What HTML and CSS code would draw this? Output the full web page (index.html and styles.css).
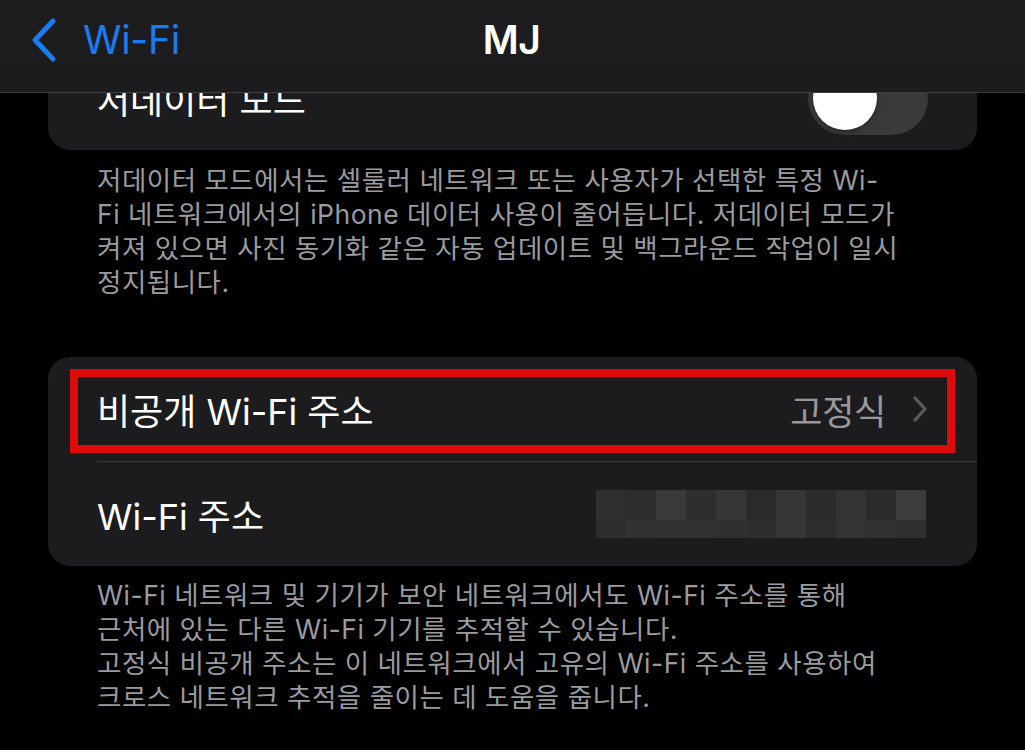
FILE: index.html
```html
<!DOCTYPE html>
<html lang="ko">
<head>
<meta charset="utf-8">
<title>MJ</title>
<link rel="stylesheet" href="styles.css">
</head>
<body>
<div class="screen">
  <header class="navbar">
    <div class="nav-back">
      <svg class="back-chevron" viewBox="0 0 28 46" width="28" height="46">
        <path d="M23 4 L5 23 L23 42" fill="none" stroke="#1a7cf0" stroke-width="5" stroke-linecap="round" stroke-linejoin="round"/>
      </svg>
      <span class="back-label">Wi-Fi</span>
    </div>
    <div class="nav-title">MJ</div>
    <div class="nav-spacer"></div>
  </header>

  <main class="content">
    <section class="card card-top">
      <div class="row">
        <span class="row-label">저데이터 모드</span>
        <div class="toggle"><div class="knob"></div></div>
      </div>
    </section>
    <p class="footnote">
      <span class="line">저데이터 모드에서는 셀룰러 네트워크 또는 사용자가 선택한 특정 Wi-</span>
      <span class="line">Fi 네트워크에서의 iPhone 데이터 사용이 줄어듭니다. 저데이터 모드가</span>
      <span class="line">켜져 있으면 사진 동기화 같은 자동 업데이트 및 백그라운드 작업이 일시</span>
      <span class="line">정지됩니다.</span>
    </p>

    <section class="card card-second">
      <div class="row row-private">
        <span class="row-label">비공개 Wi-Fi 주소</span>
        <div class="row-value">
          <span class="value-text">고정식</span>
          <svg class="chevron" viewBox="0 0 16 28" width="16" height="28">
            <path d="M3 3 L13 14 L3 25" fill="none" stroke="#5c5c60" stroke-width="3.2" stroke-linecap="round" stroke-linejoin="round"/>
          </svg>
        </div>
        <div class="highlight"></div>
      </div>
      <div class="separator"></div>
      <div class="row">
        <span class="row-label">Wi-Fi 주소</span>
        <div class="mosaic">
          <div class="m" style="background:#2f2f31"></div>
          <div class="m" style="background:#2d2d2f"></div>
          <div class="m" style="background:#3a3a3c"></div>
          <div class="m" style="background:#2e2e30"></div>
          <div class="m" style="background:#363638"></div>
          <div class="m" style="background:#2a2a2c"></div>
          <div class="m" style="background:#363638"></div>
          <div class="m" style="background:#2b2b2d"></div>
          <div class="m" style="background:#333336"></div>
          <div class="m" style="background:#2b2b2d"></div>
          <div class="m" style="background:#3c3c3e"></div>
          <div class="m" style="background:#2d2d2f"></div>
          <div class="m" style="background:#323234"></div>
          <div class="m" style="background:#313133"></div>
          <div class="m" style="background:#313133"></div>
          <div class="m" style="background:#303032"></div>
          <div class="m" style="background:#2e2e30"></div>
          <div class="m" style="background:#363638"></div>
          <div class="m" style="background:#2c2c2e"></div>
          <div class="m" style="background:#333335"></div>
          <div class="m" style="background:#313133"></div>
          <div class="m" style="background:#303032"></div>
        </div>
      </div>
    </section>
    <p class="footnote footnote-bottom">
      <span class="line">Wi-Fi 네트워크 및 기기가 보안 네트워크에서도 Wi-Fi 주소를 통해</span>
      <span class="line">근처에 있는 다른 Wi-Fi 기기를 추적할 수 있습니다.</span>
      <span class="line">고정식 비공개 주소는 이 네트워크에서 고유의 Wi-Fi 주소를 사용하여</span>
      <span class="line">크로스 네트워크 추적을 줄이는 데 도움을 줍니다.</span>
    </p>
  </main>
</div>
</body>
</html>
```
FILE: styles.css
```css
* { box-sizing: border-box; }

html, body {
  margin: 0;
  padding: 0;
  background: #000;
}

body {
  font-family: "Inter", "Noto Sans CJK KR", "Noto Sans", sans-serif;
  color: #fff;
  width: 1025px;
  height: 750px;
  overflow: hidden;
}

.screen {
  position: relative;
  width: 1025px;
  height: 750px;
  overflow: hidden;
}

/* Navigation bar overlays scrolled content */
.navbar {
  position: absolute;
  top: 0;
  left: 0;
  right: 0;
  height: 93px;
  z-index: 5;
  background: linear-gradient(180deg, #1d1d1f 0%, #1c1c1e 100%);
  border-bottom: 1px solid #3f3f42;
  display: grid;
  grid-template-columns: 1fr auto 1fr;
  align-items: center;
  padding: 0 30px 14px 30px;
}

.nav-back {
  display: flex;
  align-items: center;
  gap: 25px;
}

.back-chevron { display: block; margin-top: 2px; }

.back-label {
  color: #1a7cf0;
  font-size: 39px;
  letter-spacing: -0.3px;
  line-height: 1;
}

.nav-title {
  font-size: 39px;
  font-weight: 600;
  line-height: 1;
  color: #fff;
  letter-spacing: -0.5px;
  transform: translateX(-1px);
}

.content {
  padding: 46px 48px 0 48px;
  display: flex;
  flex-direction: column;
}

.card {
  background: #1c1c1e;
  border-radius: 22px;
  overflow: hidden;
}

.row {
  position: relative;
  height: 104px;
  display: flex;
  align-items: center;
  justify-content: space-between;
  padding: 0 49px 0 49px;
}

.row-label {
  font-size: 36px;
  letter-spacing: 0;
  color: #fff;
  white-space: nowrap;
}

.toggle {
  width: 120px;
  height: 73px;
  border-radius: 37px;
  background: #3a3a3d;
  padding: 5px;
  display: flex;
  align-items: center;
}

.knob {
  width: 64px;
  height: 64px;
  border-radius: 50%;
  background: #fff;
  box-shadow: 0 2px 6px rgba(0,0,0,0.35);
}

.footnote {
  margin: 13px 0 0 0;
  padding: 0 49px;
  font-size: 26.5px;
  line-height: 34px;
  color: #9a9a9f;
  letter-spacing: 0.5px;
}

.footnote .line {
  display: block;
  white-space: nowrap;
}

.card-second {
  margin-top: 58px;
}

.footnote-bottom {
  margin-top: 12px;
}

.row-value {
  display: flex;
  align-items: center;
  gap: 26px;
}

.value-text {
  font-size: 35px;
  color: #98989d;
  letter-spacing: -0.3px;
}

.chevron { display: block; }

.highlight {
  position: absolute;
  left: 22px;
  right: 22px;
  top: 12px;
  bottom: 8px;
  border: 8px solid #e00a0a;
  pointer-events: none;
}

.separator {
  height: 1px;
  background: #38383b;
  margin-left: 49px;
}

.mosaic {
  display: grid;
  grid-template-columns: repeat(11, 30px);
  grid-template-rows: 30px 18px;
  width: 332px;
  filter: blur(0.6px);
}

.m { width: 100%; height: 100%; }
```
